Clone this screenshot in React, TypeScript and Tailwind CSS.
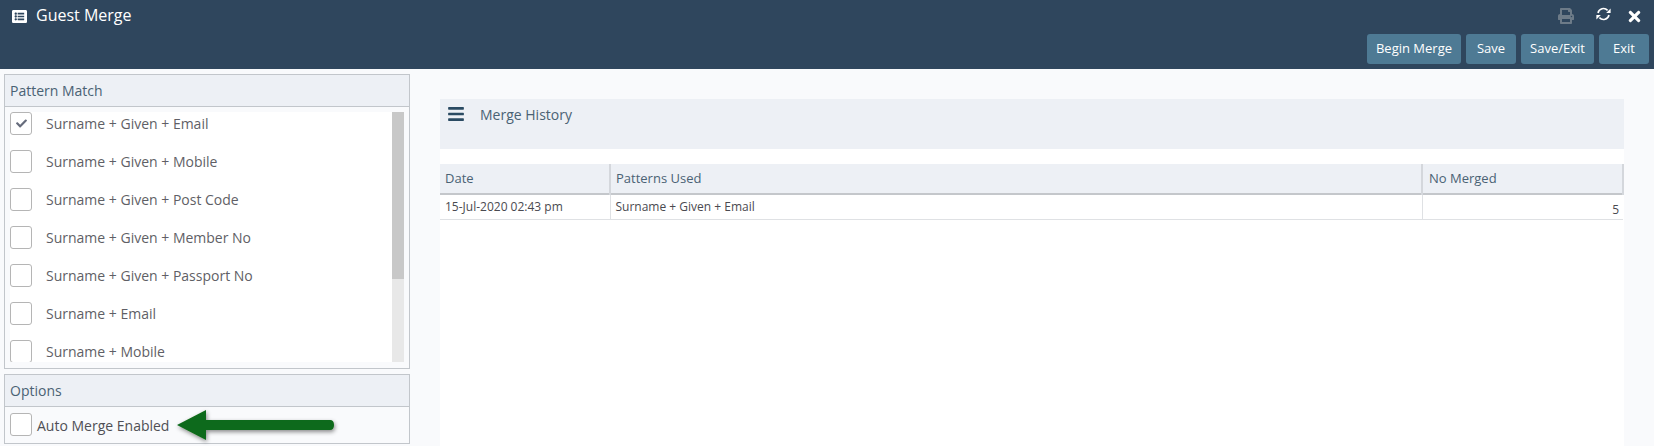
import React from "react";
import { FaListAlt, FaPrint, FaTimes, FaBars, FaCheck } from "react-icons/fa";

const patterns = [
  "Surname + Given + Email",
  "Surname + Given + Mobile",
  "Surname + Given + Post Code",
  "Surname + Given + Member No",
  "Surname + Given + Passport No",
  "Surname + Email",
  "Surname + Mobile",
];

function Box({ checked }: { checked?: boolean }) {
  return (
    <span className="flex h-[23px] w-[22px] shrink-0 items-center justify-center rounded-[3px] border border-[#b5b5b5] bg-white text-[#666c7c]">
      {checked && <FaCheck className="text-[11px]" />}
    </span>
  );
}

function Button({ label, w }: { label: string; w: string }) {
  return (
    <button className={`h-[30px] ${w} rounded-[3px] bg-[#4e7a94] text-center text-[13px] text-white`}>
      {label}
    </button>
  );
}

function Sync() {
  return (
    <svg className="ml-[22px] mt-[7px]" width="15" height="14" viewBox="0 0 15 14" fill="none">
      <path d="M2 6 A5.6 5.6 0 0 1 11.6 3.4" stroke="white" strokeWidth="1.6" />
      <path d="M13 8 A5.6 5.6 0 0 1 3.4 10.6" stroke="white" strokeWidth="1.6" />
      <path d="M14.6 1.6 V6 H10.2 Z" fill="white" />
      <path d="M0.4 12.4 V8 H4.8 Z" fill="white" />
    </svg>
  );
}

export default function App() {
  return (
    <div className="relative flex h-[446px] w-[1654px] flex-col overflow-hidden bg-[#f9fafc] font-['Open_Sans',sans-serif]">
      <header className="flex h-[69px] shrink-0 flex-col bg-[#2f465d] text-white">
        <div className="flex h-[34px] items-start">
          <FaListAlt className="ml-3 mt-[9px] text-[15px]" />
          <span className="ml-[9px] mt-[2px] text-[16px] leading-[26px]">Guest Merge</span>
          <div className="ml-auto flex items-start">
            <FaPrint className="mt-[8px] text-[16px] text-[#6d7b88]" />
            <Sync />
            <FaTimes className="ml-[14.5px] mr-[11.5px] mt-[8px] text-[17px]" />
          </div>
        </div>
        <div className="flex justify-end gap-[5px] pr-[5px]">
          <Button label="Begin Merge" w="w-[94px]" />
          <Button label="Save" w="w-[50px]" />
          <Button label="Save/Exit" w="w-[73px]" />
          <Button label="Exit" w="w-[50px]" />
        </div>
      </header>

      <main className="flex min-h-0 flex-1">
        <aside className="ml-1 mt-[5px] flex w-[406px] shrink-0 flex-col gap-[5px]">
          <section className="flex h-[295px] flex-col border border-[#c2c6cb]">
            <h2 className="flex h-[32px] shrink-0 items-center border-b border-[#c2c6cb] bg-[#edf0f5] pl-[5px] text-[14px] font-normal text-[#4a6274]">
              Pattern Match
            </h2>
            <div className="mx-[5px] mt-[5px] flex h-[250px] overflow-hidden bg-white">
              <div className="flex-1">
                {patterns.map((p, i) => (
                  <div key={p} className="flex h-[38px] items-start">
                    <Box checked={i === 0} />
                    <span className="ml-[14px] text-[14px] leading-[23px] text-[#5f5f66]">{p}</span>
                  </div>
                ))}
              </div>
              <div className="h-full w-3 bg-[#e8e8e8]">
                <div className="h-[167px] bg-[#c8c8c8]" />
              </div>
            </div>
          </section>
          <section className="flex h-[70px] flex-col border border-[#c2c6cb]">
            <h2 className="flex h-[32px] shrink-0 items-center border-b border-[#c2c6cb] bg-[#edf0f5] pl-[5px] text-[14px] font-normal text-[#4a6274]">
              Options
            </h2>
            <div className="flex items-center pl-[5px] pt-[5px]">
              <Box />
              <span className="ml-[5px] mt-[2px] text-[14px] leading-[23px] text-[#4f4f55]">Auto Merge Enabled</span>
            </div>
          </section>
        </aside>

        <div className="ml-[30px] mt-[30px] flex w-[1184px] flex-col bg-white">
          <div className="flex h-[50px] shrink-0 items-start bg-[#edf0f5]">
            <FaBars className="ml-[7px] mt-[6px] text-[18px] text-[#2a4a62]" />
            <span className="ml-[15px] mt-[6px] text-[14px] leading-5 text-[#4a6274]">Merge History</span>
          </div>
          <table className="mt-[15px] w-full table-fixed border-collapse">
            <thead>
              <tr className="h-[30px] border-b-2 border-[#c4c7cb] bg-[#edf0f5] text-left text-[13px] text-[#4a6274]">
                <th className="w-[170px] border-r-2 border-[#d4d7dc] pl-[5px] font-normal">Date</th>
                <th className="border-r-2 border-[#d4d7dc] pl-[5px] font-normal">Patterns Used</th>
                <th className="w-[201px] border-r-2 border-[#d4d7dc] pl-[6px] font-normal">No Merged</th>
              </tr>
            </thead>
            <tbody>
              <tr className="h-[24px] border-b border-[#dfe1e4] text-[12px] text-[#4a4a50]">
                <td className="border-r border-[#dfe1e4] pl-[5px]">15-Jul-2020 02:43 pm</td>
                <td className="border-r border-[#dfe1e4] pl-[5px]">Surname + Given + Email</td>
                <td className="pr-[4px] pt-[6px] text-right">5</td>
              </tr>
            </tbody>
          </table>
        </div>
      </main>

      <svg className="absolute left-[170px] top-[400px]" width="180" height="46" viewBox="0 0 180 46">
        <defs>
          <filter id="arrowShadow" x="-10%" y="-30%" width="120%" height="170%">
            <feDropShadow dx="1" dy="2" stdDeviation="2" floodColor="#000" floodOpacity="0.45" />
          </filter>
        </defs>
        <path
          d="M7 25 L36 10 V20 H160 Q164 20 164 25 Q164 30 160 30 H36 V40 Z"
          fill="#116a1a"
          filter="url(#arrowShadow)"
        />
      </svg>
    </div>
  );
}
